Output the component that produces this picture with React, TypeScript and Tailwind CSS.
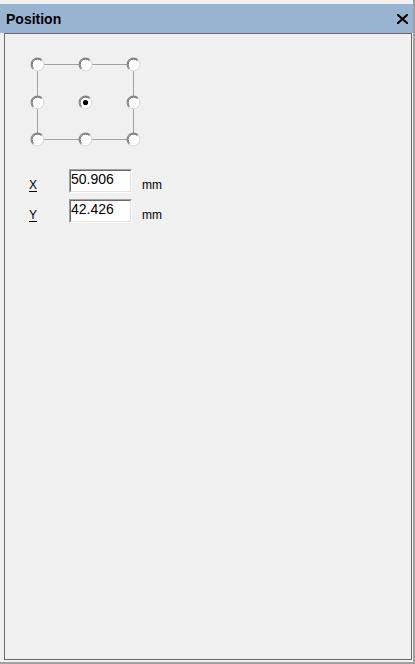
import React from "react";

function Radio({ cx, cy, checked }: { cx: number; cy: number; checked?: boolean }) {
  const r = 6.5;
  const a = (rr: number) => rr * 0.707;
  const r2 = r - 1;
  return (
    <g>
      <circle cx={cx} cy={cy} r={r} fill="#ffffff" />
      <path
        d={`M ${cx - a(r)} ${cy + a(r)} A ${r} ${r} 0 0 1 ${cx + a(r)} ${cy - a(r)}`}
        fill="none"
        stroke="#8a8a8a"
        strokeWidth={1.1}
      />
      <path
        d={`M ${cx - a(r2)} ${cy + a(r2)} A ${r2} ${r2} 0 0 1 ${cx + a(r2)} ${cy - a(r2)}`}
        fill="none"
        stroke="#5a5a5a"
        strokeWidth={1}
      />
      <path
        d={`M ${cx + a(r)} ${cy - a(r)} A ${r} ${r} 0 0 1 ${cx - a(r)} ${cy + a(r)}`}
        fill="none"
        stroke="#d8d8d8"
        strokeWidth={1}
      />
      {checked && <circle cx={cx} cy={cy} r={2.6} fill="#000000" />}
    </g>
  );
}

function Field({ label, value }: { label: string; value: string }) {
  return (
    <div className="flex items-start h-[24px]">
      <div className="w-[40px] mt-[9px] text-[12px] leading-[14px] text-black underline underline-offset-[2px]">
        {label}
      </div>
      <div className="w-[63px] h-[24px] border-t border-l border-[#a0a0a0] border-r border-b border-r-white border-b-white">
        <div className="w-full h-full border-t border-l border-[#696969] border-r border-b border-r-[#e3e3e3] border-b-[#e3e3e3] bg-white">
          <div className="text-[14px] leading-[16px] text-black">{value}</div>
        </div>
      </div>
      <div className="ml-[10px] mt-[9px] text-[12px] leading-[14px] text-black">mm</div>
    </div>
  );
}

export default function App() {
  const xs = [7, 55, 103];
  const ys = [7, 45, 82];
  return (
    <div
      className="w-[415px] h-[664px] bg-[#f0f0f0] border-r-2 border-b-2 border-[#a0a0a0] flex flex-col pt-[4px]"
      style={{ fontFamily: '"Liberation Sans", Arial, sans-serif' }}
    >
      <div className="h-[29px] bg-[#99b4d1] flex items-center justify-between pl-[6px] pr-[5px] shrink-0">
        <span className="text-[14px] leading-[16px] font-bold text-black pt-[1px]">Position</span>
        <svg width="11" height="10" viewBox="0 0 11 10">
          <path d="M1 1 L10 9 M10 1 L1 9" stroke="#000" strokeWidth="2.2" strokeLinecap="square" />
        </svg>
      </div>
      <div className="ml-[4px] w-[408px] flex-1 mb-[2px] border border-[#696969] bg-[#f0f0f0] flex flex-col">
        <svg width="112" height="92" viewBox="0 0 112 92" className="ml-[25px] mt-[23px]">
          <rect
            x={xs[0] + 0.5}
            y={ys[0] + 0.5}
            width={xs[2] - xs[0]}
            height={ys[2] - ys[0]}
            fill="none"
            stroke="#a0a0a0"
            strokeWidth={1}
          />
          {ys.map((y, i) =>
            xs.map((x, j) => <Radio key={`${i}-${j}`} cx={x + 0.5} cy={y + 0.5} checked={i === 1 && j === 1} />)
          )}
        </svg>
        <div className="flex flex-col gap-[6px] ml-[24px] mt-[20px]">
          <Field label="X" value="50.906" />
          <Field label="Y" value="42.426" />
        </div>
      </div>
    </div>
  );
}
